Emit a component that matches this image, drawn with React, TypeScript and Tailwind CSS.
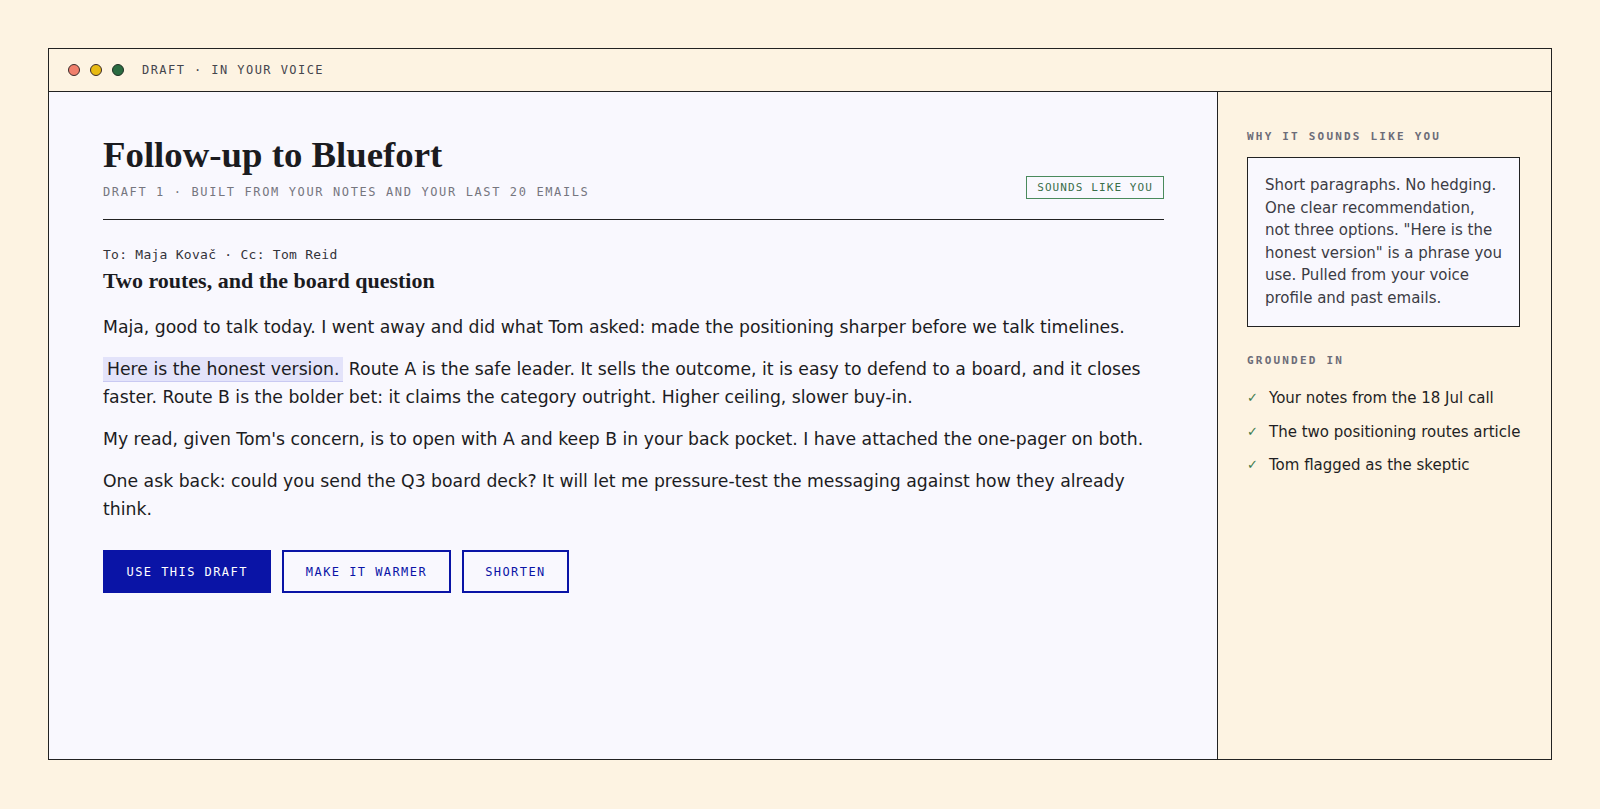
import React from "react";

const mono = { fontFamily: '"DejaVu Sans Mono", "Liberation Mono", monospace' };

export default function App() {
  return (
    <div className="min-h-screen bg-[#fdf3e2] p-12" style={{ fontFamily: '"DejaVu Sans", "Noto Sans", sans-serif' }}>
      <div className="flex h-[712px] flex-col border border-[#222]">
        <div className="flex h-[43px] shrink-0 items-center border-b border-[#222] pl-[18.5px]">
          <div className="flex items-center gap-[9.5px]">
            <span className="block h-[12.5px] w-[12.5px] rounded-full border border-[#3a2a2a] bg-[#f07f6c]" />
            <span className="block h-[12.5px] w-[12.5px] rounded-full border border-[#3a2a2a] bg-[#e8ba12]" />
            <span className="block h-[12.5px] w-[12.5px] rounded-full border border-[#1f2f25] bg-[#2a6b41]" />
          </div>
          <span className="ml-[18px] text-[12px] leading-[16px] tracking-[0.12em] text-[#45454d]" style={mono}>
            DRAFT · IN YOUR VOICE
          </span>
        </div>
        <div className="flex min-h-0 flex-1">
          <main className="flex-1 bg-[#f9f8fe] pl-[54px] pr-[53px] pt-[41px]">
            <div className="flex items-end justify-between border-b border-[#222] pb-[19px]">
              <div>
                <h1 className="text-[36.8px] font-bold leading-[43px] text-[#1b1b1f] [font-family:'Liberation_Serif',serif]">
                  Follow-up to Bluefort
                </h1>
                <div className="mt-[8px] text-[12px] leading-[16px] tracking-[0.135em] text-[#76767f]" style={mono}>
                  DRAFT 1 · BUILT FROM YOUR NOTES AND YOUR LAST 20 EMAILS
                </div>
              </div>
              <div className="mb-[1px] border border-[#4a8a5c] px-[10px] py-[3px] text-[11px] leading-[15px] tracking-[0.1em] text-[#3a6e4a]" style={mono}>
                SOUNDS LIKE YOU
              </div>
            </div>
            <div className="mt-[25px] text-[13px] leading-[20px] tracking-[0.02em] text-[#33333a]" style={mono}>
              To: Maja Kovač · Cc: Tom Reid
            </div>
            <h2 className="mt-[2px] text-[22px] font-bold leading-[28px] text-[#1b1b1f] [font-family:'Liberation_Serif',serif]">
              Two routes, and the board question
            </h2>
            <div className="mt-[18px] flex flex-col gap-[14px] text-[17.25px] leading-[28px] text-[#1c1c22]">
              <p>Maja, good to talk today. I went away and did what Tom asked: made the positioning sharper before we talk timelines.</p>
              <p>
                <span className="border-b border-[#c9c9f2] bg-[#e3e3fa] px-[4px] py-[2px]">Here is the honest version.</span> Route A is the safe leader. It sells the outcome, it is easy to defend to a board, and it closes faster. Route B is the bolder bet: it claims the category outright. Higher ceiling, slower buy-in.
              </p>
              <p>My read, given Tom's concern, is to open with A and keep B in your back pocket. I have attached the one-pager on both.</p>
              <p>One ask back: could you send the Q3 board deck? It will let me pressure-test the messaging against how they already think.</p>
            </div>
            <div className="mt-[27px] flex gap-[11px]" style={mono}>
              <button className="h-[43px] border-2 border-[#0a14a6] bg-[#0a14a6] px-[21.5px] text-[12px] tracking-[0.12em] text-white">
                USE THIS DRAFT
              </button>
              <button className="h-[43px] border-2 border-[#0a14a6] bg-transparent px-[21.5px] text-[12px] tracking-[0.12em] text-[#0a14a6]">
                MAKE IT WARMER
              </button>
              <button className="h-[43px] border-2 border-[#0a14a6] bg-transparent px-[21.5px] text-[12px] tracking-[0.12em] text-[#0a14a6]">
                SHORTEN
              </button>
            </div>
          </main>
          <aside className="w-[334px] shrink-0 border-l border-[#222] bg-[#fdf3e2] pl-[29px] pr-[31px] pt-[37px]">
            <div className="text-[11px] font-bold leading-[16px] tracking-[0.2em] text-[#6c6c78]" style={mono}>
              WHY IT SOUNDS LIKE YOU
            </div>
            <div className="mt-[12px] border border-[#222] bg-[#f9f8fe] px-[17px] pb-[17px] pt-[16px] text-[15px] leading-[22.5px] text-[#3c3c44]">
              Short paragraphs. No hedging. One clear recommendation, not three options. "Here is the honest version" is a phrase you use. Pulled from your voice profile and past emails.
            </div>
            <div className="mt-[26px] text-[11px] font-bold leading-[16px] tracking-[0.2em] text-[#6c6c78]" style={mono}>
              GROUNDED IN
            </div>
            <ul className="mt-[18px] flex flex-col gap-[11px] text-[15px] leading-[22.5px] text-[#1f1f24]">
              {["Your notes from the 18 Jul call", "The two positioning routes article", "Tom flagged as the skeptic"].map((t) => (
                <li key={t} className="flex items-center whitespace-nowrap">
                  <span className="w-[22px] shrink-0 text-[13px] text-[#3b7a4c]">✓</span>
                  <span>{t}</span>
                </li>
              ))}
            </ul>
          </aside>
        </div>
      </div>
    </div>
  );
}
